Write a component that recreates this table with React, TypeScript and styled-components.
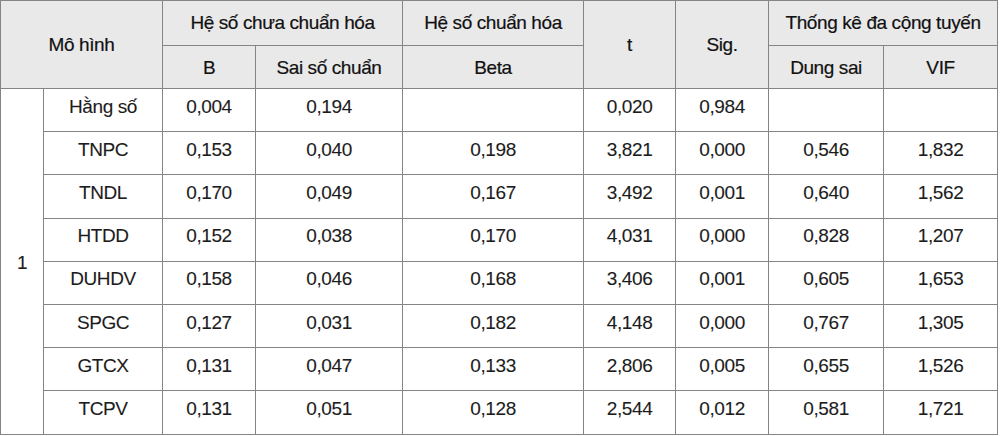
import React from 'react';
import styled, { createGlobalStyle } from 'styled-components';

const GlobalStyle = createGlobalStyle`
  body {
    margin: 0;
    background: #ffffff;
  }
`

const Table = styled.table`
  width: 997px;
  border-collapse: collapse;
  table-layout: fixed;
  font-family: "Liberation Sans", Arial, sans-serif;
  font-size: 19px;
  letter-spacing: -0.4px;
  color: #1c1c1c;
`

const HeadRow = styled.tr<{ $h: number }>`
  height: ${p => p.$h}px;
`

const HeadCell = styled.th<{ $low?: boolean }>`
  padding: ${p => (p.$low ? '2px 0 0' : '0')};
  border: 1px solid #858585;
  background: #e9e9ea;
  font-weight: 400;
  color: #111111;
  -webkit-text-stroke: 0.2px #111111;
  text-align: center;
  vertical-align: middle;
`

const BodyRow = styled.tr`
  height: 43.2px;
`

const Cell = styled.td<{ $model?: boolean }>`
  padding: ${p => (p.$model ? '4px 0 0' : '0 0 7px')};
  border: 1px solid #858585;
  text-align: center;
  vertical-align: middle;
  -webkit-text-stroke: 0.1px #1c1c1c;
`

const widths = [43, 119, 93, 147, 181, 92, 93, 115, 114]

type Row = {
  name: string
  b: string
  se: string
  beta: string
  t: string
  sig: string
  tol: string
  vif: string
}

const rows: Row[] = [
  { name: 'Hằng số', b: '0,004', se: '0,194', beta: '', t: '0,020', sig: '0,984', tol: '', vif: '' },
  { name: 'TNPC', b: '0,153', se: '0,040', beta: '0,198', t: '3,821', sig: '0,000', tol: '0,546', vif: '1,832' },
  { name: 'TNDL', b: '0,170', se: '0,049', beta: '0,167', t: '3,492', sig: '0,001', tol: '0,640', vif: '1,562' },
  { name: 'HTDD', b: '0,152', se: '0,038', beta: '0,170', t: '4,031', sig: '0,000', tol: '0,828', vif: '1,207' },
  { name: 'DUHDV', b: '0,158', se: '0,046', beta: '0,168', t: '3,406', sig: '0,001', tol: '0,605', vif: '1,653' },
  { name: 'SPGC', b: '0,127', se: '0,031', beta: '0,182', t: '4,148', sig: '0,000', tol: '0,767', vif: '1,305' },
  { name: 'GTCX', b: '0,131', se: '0,047', beta: '0,133', t: '2,806', sig: '0,005', tol: '0,655', vif: '1,526' },
  { name: 'TCPV', b: '0,131', se: '0,051', beta: '0,128', t: '2,544', sig: '0,012', tol: '0,581', vif: '1,721' },
]

const App: React.FC = () => {
  return (
    <>
      <GlobalStyle />
      <Table>
        <colgroup>
          {widths.map((w, i) => <col key={i} style={{ width: w }} />)}
        </colgroup>
        <thead>
          <HeadRow $h={45}>
            <HeadCell colSpan={2} rowSpan={2}>Mô hình</HeadCell>
            <HeadCell colSpan={2}>Hệ số chưa chuẩn hóa</HeadCell>
            <HeadCell>Hệ số chuẩn hóa</HeadCell>
            <HeadCell rowSpan={2}>t</HeadCell>
            <HeadCell rowSpan={2}>Sig.</HeadCell>
            <HeadCell colSpan={2}>Thống kê đa cộng tuyến</HeadCell>
          </HeadRow>
          <HeadRow $h={43}>
            <HeadCell $low>B</HeadCell>
            <HeadCell $low>Sai số chuẩn</HeadCell>
            <HeadCell $low>Beta</HeadCell>
            <HeadCell $low>Dung sai</HeadCell>
            <HeadCell $low>VIF</HeadCell>
          </HeadRow>
        </thead>
        <tbody>
          {rows.map((r, i) => (
            <BodyRow key={r.name}>
              {i === 0 && <Cell $model rowSpan={rows.length}>1</Cell>}
              <Cell>{r.name}</Cell>
              <Cell>{r.b}</Cell>
              <Cell>{r.se}</Cell>
              <Cell>{r.beta}</Cell>
              <Cell>{r.t}</Cell>
              <Cell>{r.sig}</Cell>
              <Cell>{r.tol}</Cell>
              <Cell>{r.vif}</Cell>
            </BodyRow>
          ))}
        </tbody>
      </Table>
    </>
  )
}

export default App;
